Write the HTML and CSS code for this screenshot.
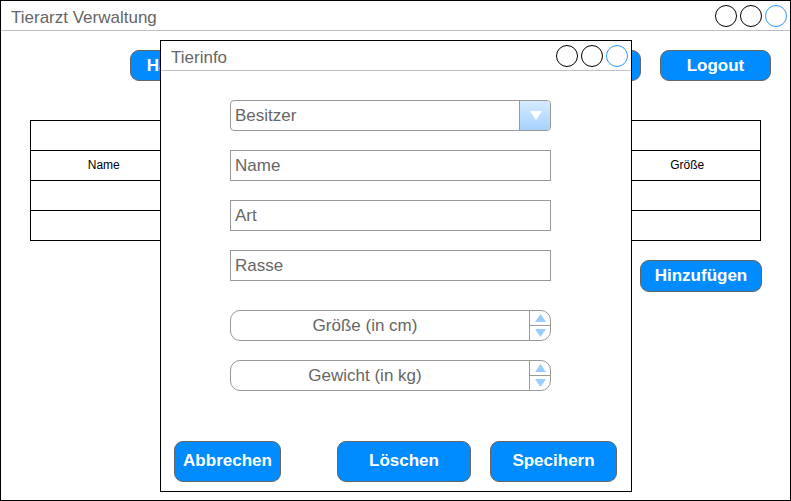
FILE: index.html
```html
<!DOCTYPE html>
<html lang="de">
<head>
<meta charset="utf-8">
<title>Tierarzt Verwaltung</title>
<link rel="stylesheet" href="styles.css">
</head>
<body>
<div class="window">
  <div class="titlebar">
    <span class="title">Tierarzt Verwaltung</span>
    <div class="controls">
      <span class="dot"></span><span class="dot"></span><span class="dot dot-blue"></span>
    </div>
  </div>
  <div class="nav">
    <button class="btn btn-nav">Haustiere</button>
    <button class="btn btn-nav"></button>
    <button class="btn btn-nav btn-push"></button>
    <button class="btn btn-nav">Logout</button>
  </div>
  <table class="grid">
    <tr><td></td><td></td><td></td><td></td><td></td></tr>
    <tr><td>Name</td><td></td><td></td><td></td><td>Größe</td></tr>
    <tr><td></td><td></td><td></td><td></td><td></td></tr>
    <tr><td></td><td></td><td></td><td></td><td></td></tr>
  </table>
  <div class="addrow">
    <button class="btn btn-add">Hinzufügen</button>
  </div>

  <div class="dialog">
    <div class="titlebar">
      <span class="title">Tierinfo</span>
      <div class="controls">
        <span class="dot"></span><span class="dot"></span><span class="dot dot-blue"></span>
      </div>
    </div>
    <div class="form">
      <div class="field select">
        <span class="ftext">Besitzer</span>
        <span class="drop"><svg width="12" height="9" viewBox="0 0 12 9"><polygon points="0,0 12,0 6,9" fill="#ffffff"/></svg></span>
      </div>
      <div class="field"><span class="ftext">Name</span></div>
      <div class="field"><span class="ftext">Art</span></div>
      <div class="field"><span class="ftext">Rasse</span></div>
      <div class="field spin spin-first">
        <span class="ctext">Größe (in cm)</span>
        <span class="arrows">
          <span class="arr"><svg width="11" height="8" viewBox="0 0 11 8"><polygon points="0,8 11,8 5.5,0" fill="#99ccff"/></svg></span>
          <span class="arr arr-down"><svg width="11" height="8" viewBox="0 0 11 8"><polygon points="0,0 11,0 5.5,8" fill="#99ccff"/></svg></span>
        </span>
      </div>
      <div class="field spin">
        <span class="ctext">Gewicht (in kg)</span>
        <span class="arrows">
          <span class="arr"><svg width="11" height="8" viewBox="0 0 11 8"><polygon points="0,8 11,8 5.5,0" fill="#99ccff"/></svg></span>
          <span class="arr arr-down"><svg width="11" height="8" viewBox="0 0 11 8"><polygon points="0,0 11,0 5.5,8" fill="#99ccff"/></svg></span>
        </span>
      </div>
    </div>
    <div class="actions">
      <button class="btn btn-cancel">Abbrechen</button>
      <button class="btn btn-delete">Löschen</button>
      <button class="btn btn-save">Specihern</button>
    </div>
  </div>
</div>
</body>
</html>
```

FILE: styles.css
```css
* { box-sizing: border-box; }
html, body { margin: 0; padding: 0; background: #ffffff; }
body { font-family: "Liberation Sans", Arial, sans-serif; }

.window {
  position: relative;
  width: 791px;
  height: 501px;
  border: 1px solid #000000;
  background: #ffffff;
  overflow: hidden;
}

.titlebar {
  height: 30px;
  border-bottom: 1px solid #c0c0c0;
  display: flex;
  align-items: center;
  justify-content: space-between;
  padding: 0 3px 0 10px;
}
.title {
  font-size: 17px;
  color: #666666;
  line-height: 1;
  padding-top: 3px;
}
.controls { display: flex; gap: 3px; align-items: center; padding-top: 1px; }
.dot {
  width: 22px;
  height: 22px;
  border-radius: 50%;
  border: 1px solid #000000;
  display: block;
}
.dot-blue { border-color: #3399ff; }

.btn {
  font-family: "Liberation Sans", Arial, sans-serif;
  font-weight: bold;
  font-size: 17px;
  color: #ffffff;
  background: #008cff;
  border: 1px solid #666666;
  border-radius: 9px;
  padding: 0;
  display: flex;
  align-items: center;
  justify-content: center;
}

.nav {
  display: flex;
  margin-top: 19px;
  padding: 0 19px 0 129px;
  gap: 19px;
}
.btn-nav { width: 111px; height: 31px; }
.btn-push { margin-left: auto; }

.grid {
  border-collapse: collapse;
  margin: 39px 0 0 29px;
  width: 731px;
  table-layout: fixed;
}
.grid td {
  height: 30px;
  border-top: 1px solid #000000;
  border-bottom: 1px solid #000000;
  font-size: 12px;
  color: #000000;
  text-align: center;
  padding: 0 0 1px 0;
}
.grid tr td:first-child { border-left: 1px solid #000000; }
.grid tr td:last-child { border-right: 1px solid #000000; }

.addrow {
  display: flex;
  justify-content: flex-end;
  margin-top: 19px;
  padding-right: 28px;
}
.btn-add { width: 122px; height: 32px; }

.dialog {
  position: absolute;
  left: 159px;
  top: 39px;
  width: 472px;
  height: 452px;
  border: 1px solid #000000;
  background: #ffffff;
  display: flex;
  flex-direction: column;
}
.dialog .titlebar { padding-left: 10px; }

.form {
  display: flex;
  flex-direction: column;
  gap: 19px;
  padding: 29px 0 0 69px;
}
.field {
  width: 321px;
  height: 31px;
  border: 1px solid #999999;
  display: flex;
  align-items: center;
  color: #666666;
  font-size: 17px;
}
.ftext { padding-left: 4px; }

.select {
  border-radius: 4px;
  justify-content: space-between;
}
.drop {
  width: 31px;
  height: 29px;
  border-left: 1px solid #999999;
  border-radius: 0 3px 3px 0;
  background: linear-gradient(#d6ebff, #a6d2ff);
  display: flex;
  align-items: center;
  justify-content: center;
}
.drop svg { display: block; margin-left: 1px; }

.spin {
  border-radius: 10px;
}
.spin-first { margin-top: 10px; }
.ctext { flex: 1; text-align: center; padding-right: 30px; }
.arrows {
  width: 21px;
  height: 29px;
  border-left: 1px solid #999999;
  display: flex;
  flex-direction: column;
}
.arr {
  flex: 1;
  display: flex;
  align-items: center;
  justify-content: center;
}
.arr-down { border-top: 1px solid #999999; }
.arr svg { display: block; }

.actions {
  display: flex;
  margin-top: auto;
  margin-bottom: 9px;
  padding-left: 13px;
}
.actions .btn { height: 41px; padding-bottom: 2px; }
.btn-cancel { width: 107px; }
.btn-delete { width: 134px; margin-left: 56px; }
.btn-save { width: 127px; margin-left: 19px; }
```
